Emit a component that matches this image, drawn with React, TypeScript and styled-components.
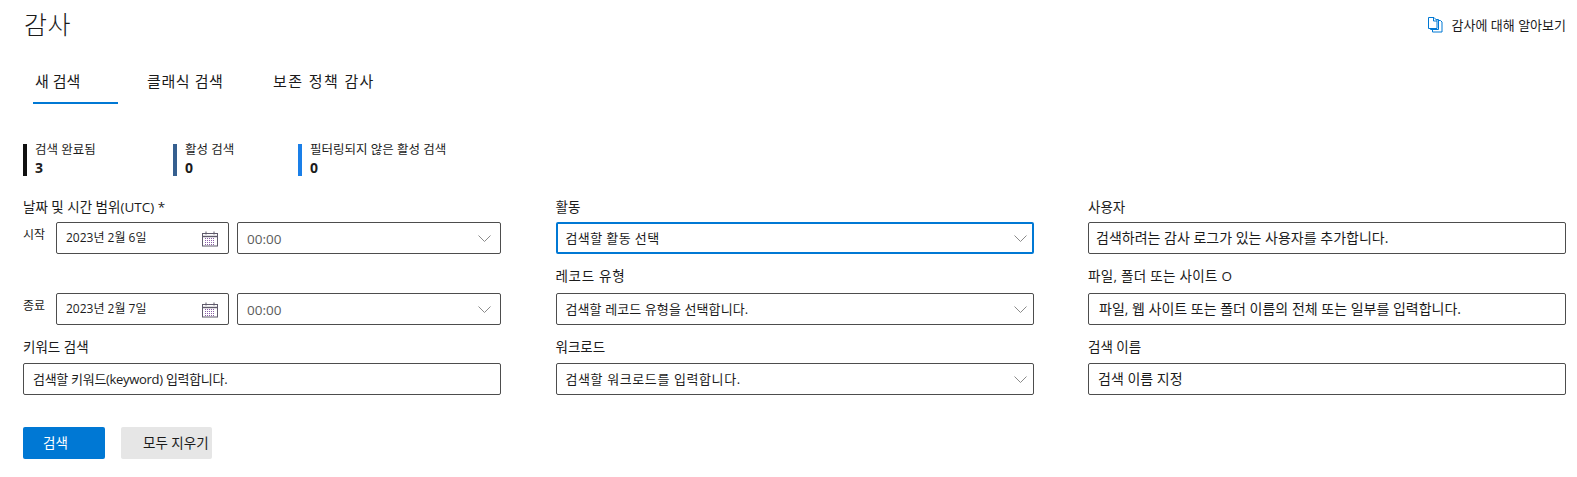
import React from "react";
import styled, { createGlobalStyle } from "styled-components";

const Global = createGlobalStyle`
  html, body { margin: 0; padding: 0; background: #fff; }
  body { font-family: "Open Sans", "Noto Sans CJK KR", sans-serif; color: #1b1b1b; font-size: 13px; }
`;

const Page = styled.div`
  width: 1577px;
  height: 477px;
  box-sizing: border-box;
  padding: 0 11px 0 23px;
  overflow: hidden;
`;
const Header = styled.header`
  display: flex;
  justify-content: space-between;
  align-items: flex-start;
  height: 62px;
`;
const Title = styled.h1`
  margin: 7px 0 0 1px;
  font-size: 25px;
  line-height: 34px;
  font-weight: 300;
  letter-spacing: 0.5px;
`;
const LearnLink = styled.a`
  display: flex;
  align-items: center;
  gap: 9px;
  margin-top: 16px;
  font-size: 13px;
  line-height: 18px;
  color: #1b1b1b;
`;
const Tabs = styled.nav`
  display: flex;
  height: 42px;
  margin-left: 10px;
`;
const Tab = styled.div<{ $active?: boolean; $width: number; $spacing?: number }>`
  width: ${(p) => p.$width}px;
  box-sizing: border-box;
  padding: 8px 0 0 2px;
  font-size: 15px;
  line-height: 22px;
  height: 42px;
  letter-spacing: ${(p) => p.$spacing ?? 0}px;
  white-space: nowrap;
  border-bottom: 2px solid ${(p) => (p.$active ? "#0078d4" : "transparent")};
`;
const Stats = styled.section`
  display: flex;
  margin-top: 40px;
  height: 32px;
`;
const Stat = styled.div<{ $color: string; $width: number }>`
  width: ${(p) => p.$width}px;
  border-left: 4px solid ${(p) => p.$color};
  padding-left: 8px;
  box-sizing: border-box;
`;
const StatLabel = styled.div`
  font-size: 12.5px;
  line-height: 16px;
  margin-top: -2px;
`;
const StatValue = styled.div`
  font-size: 14px;
  line-height: 18px;
  font-weight: 700;
  margin-top: 1px;
`;
const FormGrid = styled.section`
  display: grid;
  grid-template-columns: 478px 478px 478px;
  column-gap: 54.5px;
  margin-top: 18px;
`;
const Column = styled.div`
  display: flex;
  flex-direction: column;
`;
const Label = styled.div<{ $height: number; $top: number; $spacing?: number }>`
  font-size: 13.5px;
  line-height: 18px;
  height: ${(p) => p.$height}px;
  padding-top: ${(p) => p.$top}px;
  letter-spacing: ${(p) => p.$spacing ?? 0}px;
  box-sizing: border-box;
  white-space: nowrap;
  color: #1b1b1b;
`;
const Spacer = styled.div`
  height: 39px;
`;
const DateRow = styled.div`
  display: flex;
  align-items: flex-start;
`;
const DateCaption = styled.div`
  width: 33px;
  margin-top: 4px;
  font-size: 12px;
  line-height: 18px;
`;
const Field = styled.div<{
  $focused?: boolean;
  $width?: number;
  $pad?: number;
  $right?: number;
  $size?: number;
  $spacing?: number;
}>`
  display: flex;
  align-items: center;
  justify-content: space-between;
  box-sizing: border-box;
  height: 32px;
  width: ${(p) => (p.$width ? `${p.$width}px` : "100%")};
  padding: 0 ${(p) => (p.$right ?? 6) - (p.$focused ? 1 : 0)}px 2px
    ${(p) => (p.$pad ?? 9) - (p.$focused ? 1 : 0)}px;
  border: ${(p) => (p.$focused ? "2px solid #0078d4" : "1px solid #4d4d4d")};
  border-radius: 2px;
  font-size: ${(p) => p.$size ?? 13}px;
  letter-spacing: ${(p) => p.$spacing ?? 0}px;
  color: #1b1b1b;
  white-space: nowrap;
  background: #fff;
`;
const DateText = styled.span`
  font-size: 12px;
`;
const TimeText = styled.span`
  color: #5c5c5c;
  font-size: 13.5px;
  margin-top: 4px;
`;
const DateGap = styled.div`
  width: 8px;
  flex: none;
`;
const Buttons = styled.div`
  display: flex;
  gap: 16px;
  margin-top: 32px;
`;
const PrimaryButton = styled.button`
  width: 82px;
  height: 32px;
  border: none;
  border-radius: 2px;
  background: #0078d4;
  color: #fff;
  font: inherit;
  font-size: 13.5px;
  text-align: left;
  padding: 0 0 2px 20px;
`;
const SecondaryButton = styled.button`
  width: 91px;
  height: 32px;
  border: none;
  border-radius: 2px;
  background: #e6e6e6;
  color: #1b1b1b;
  font: inherit;
  font-size: 13.5px;
  text-align: left;
  padding: 0 0 2px 22px;
  white-space: nowrap;
`;
const ChevronSvg = styled.svg`
  margin-top: 2px;
`;
const CalendarSvg = styled.svg`
  margin: 3px 2px 0 0;
`;

const Chevron = () => (
  <ChevronSvg width="13" height="7" viewBox="0 0 13 7" fill="none" aria-hidden>
    <path d="M0.5 0.5l6 6 6-6" stroke="#8a8a8a" strokeWidth="1" />
  </ChevronSvg>
);

const CalendarIcon = () => (
  <CalendarSvg width="17" height="16" viewBox="0 0 17 16" fill="none" aria-hidden>
    <rect x="0.5" y="2.5" width="15" height="12.5" stroke="#5f5a6b" />
    <path d="M1 5.5h14" stroke="#5f5a6b" strokeWidth="1.4" />
    <path d="M4 0.5v3M12 0.5v3" stroke="#5f5a6b" />
    <path d="M3 7.5h10M3 9.5h10M3 11.5h10M3 13.5h10" stroke="#8a5fa8" strokeDasharray="1 1" />
  </CalendarSvg>
);

const DocsIcon = () => (
  <svg width="15" height="16" viewBox="0 0 15 16" fill="none" aria-hidden>
    <path d="M4.5 3.5h8l1.5 1.5v10H4.5z" fill="#fff" stroke="#0078d4" />
    <path d="M2.5 2.5h8v10h-8z" fill="#fff" stroke="#0078d4" />
    <path d="M0.5 0.5h5.5l3 3v8h-8.5z" fill="#fff" stroke="#0078d4" />
    <path d="M5.5 0.5v3.5h3.5" stroke="#0078d4" />
  </svg>
);

const SelectField = ({ text, focused, spacing }: { text: string; focused?: boolean; spacing?: number }) => (
  <Field $focused={focused} $spacing={spacing}>
    <span>{text}</span>
    <Chevron />
  </Field>
);

const DateTime = ({ caption, date }: { caption: string; date: string }) => (
  <DateRow>
    <DateCaption>{caption}</DateCaption>
    <Field $width={173} $right={7}>
      <DateText>{date}</DateText>
      <CalendarIcon />
    </Field>
    <DateGap />
    <Field $width={264} $right={9}>
      <TimeText>00:00</TimeText>
      <Chevron />
    </Field>
  </DateRow>
);

export default function App() {
  return (
    <Page>
      <Global />
      <Header>
        <Title>감사</Title>
        <LearnLink>
          <DocsIcon />
          감사에 대해 알아보기
        </LearnLink>
      </Header>
      <Tabs>
        <Tab $active $width={85}>새 검색</Tab>
        <Tab $width={27} />
        <Tab $width={126} $spacing={0.6}>클래식 검색</Tab>
        <Tab $width={120} $spacing={1.4}>보존 정책 감사</Tab>
      </Tabs>
      <Stats>
        <Stat $color="#111111" $width={150}>
          <StatLabel>검색 완료됨</StatLabel>
          <StatValue>3</StatValue>
        </Stat>
        <Stat $color="#355f8f" $width={125}>
          <StatLabel>활성 검색</StatLabel>
          <StatValue>0</StatValue>
        </Stat>
        <Stat $color="#1a7fe8" $width={200}>
          <StatLabel>필터링되지 않은 활성 검색</StatLabel>
          <StatValue>0</StatValue>
        </Stat>
      </Stats>
      <FormGrid>
        <Column>
          <Label $height={28} $top={4}>날짜 및 시간 범위(UTC) *</Label>
          <DateTime caption="시작" date="2023년 2월 6일" />
          <Spacer />
          <DateTime caption="종료" date="2023년 2월 7일" />
          <Label $height={38} $top={13}>키워드 검색</Label>
          <Field $spacing={-0.3}>검색할 키워드(keyword) 입력합니다.</Field>
        </Column>
        <Column>
          <Label $height={28} $top={4}>활동</Label>
          <SelectField focused text="검색할 활동 선택" spacing={0.4} />
          <Label $height={39} $top={13} $spacing={0.7}>레코드 유형</Label>
          <SelectField text="검색할 레코드 유형을 선택합니다." spacing={0.1} />
          <Label $height={38} $top={13}>워크로드</Label>
          <SelectField text="검색할 워크로드를 입력합니다." spacing={0.6} />
        </Column>
        <Column>
          <Label $height={28} $top={4}>사용자</Label>
          <Field $pad={7} $size={14}>검색하려는 감사 로그가 있는 사용자를 추가합니다.</Field>
          <Label $height={39} $top={13} $spacing={0.3}>파일, 폴더 또는 사이트 O</Label>
          <Field $pad={10} $size={14}>파일, 웹 사이트 또는 폴더 이름의 전체 또는 일부를 입력합니다.</Field>
          <Label $height={38} $top={13}>검색 이름</Label>
          <Field $size={14}>검색 이름 지정</Field>
        </Column>
      </FormGrid>
      <Buttons>
        <PrimaryButton>검색</PrimaryButton>
        <SecondaryButton>모두 지우기</SecondaryButton>
      </Buttons>
    </Page>
  );
}
